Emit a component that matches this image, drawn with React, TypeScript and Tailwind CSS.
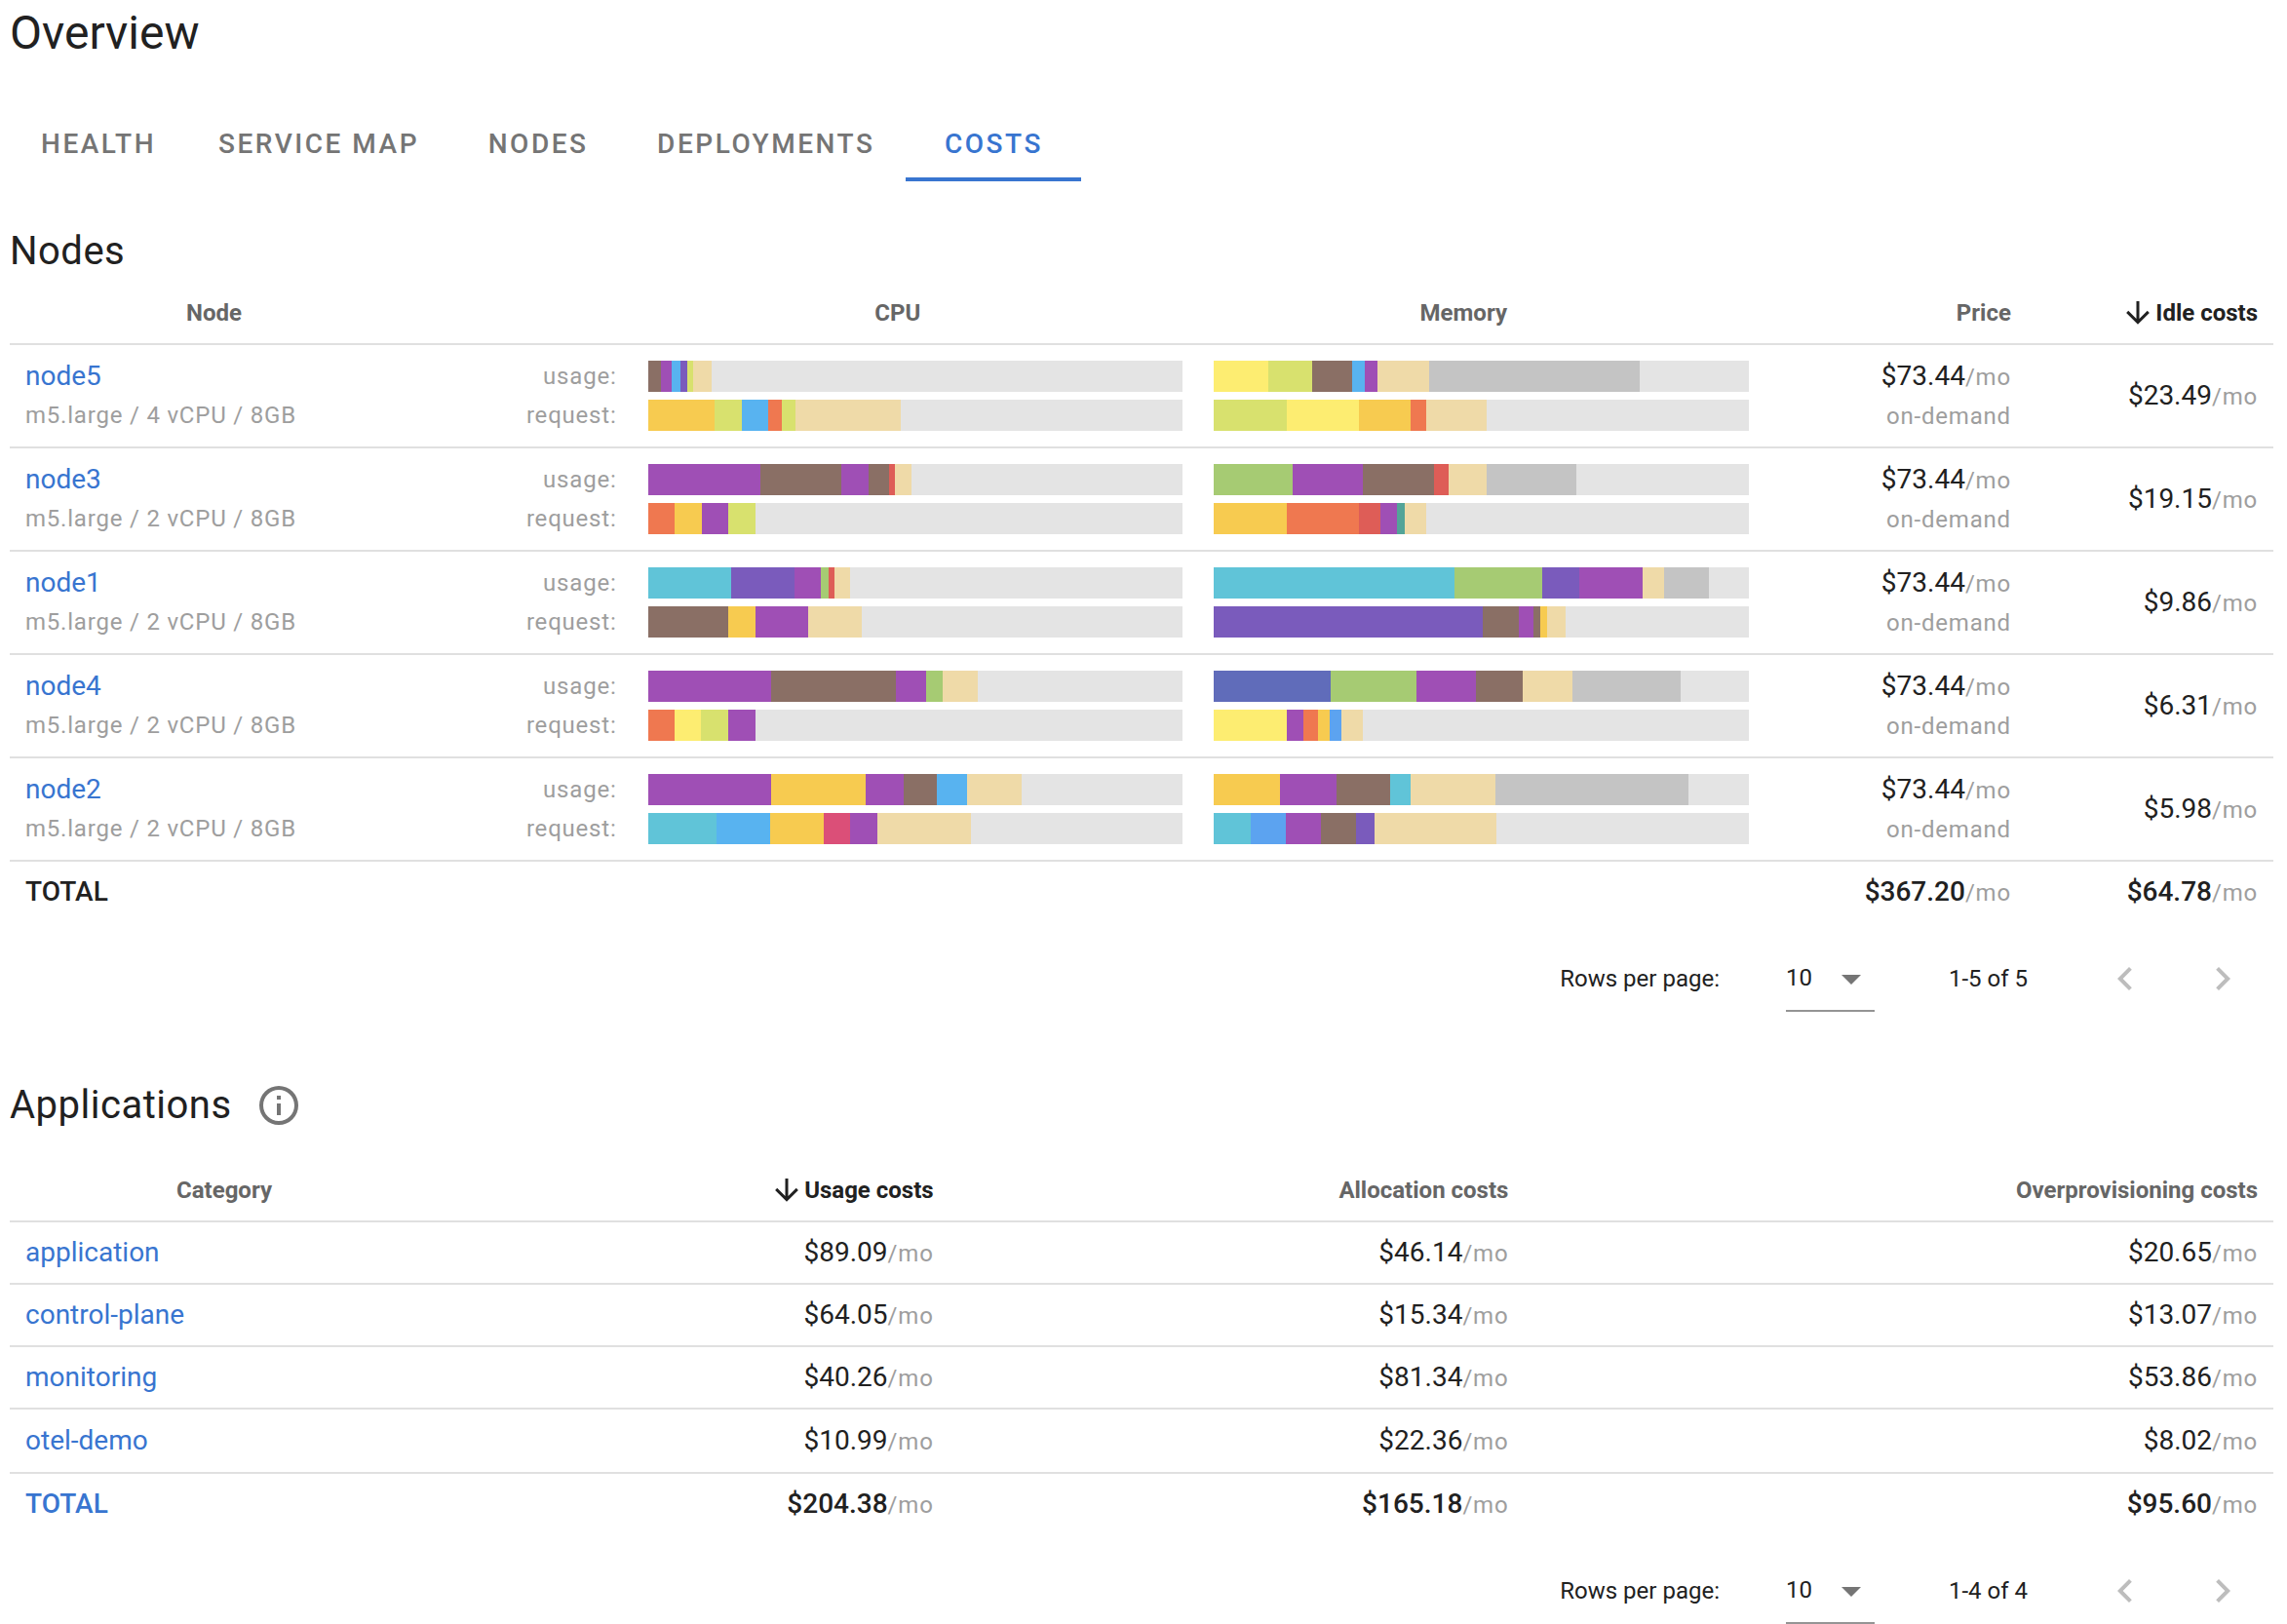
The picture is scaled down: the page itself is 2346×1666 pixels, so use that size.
import React, { useState } from 'react';
import clsx from 'clsx';

type Segment = [color: string, percent: number];

interface NodeRow {
  name: string;
  info: string;
  cpuUsage: Segment[];
  cpuRequest: Segment[];
  memUsage: Segment[];
  memRequest: Segment[];
  price: string;
  idle: string;
}

// Chart palette
const AMBER = '#f7cb50';
const BLUE = '#58b3f0';
const BLUE_2 = '#5ca3f0';
const BROWN = '#8a6f65';
const CYAN = '#60c4d8';
const GREEN = '#a6cb73';
const INDIGO = '#606cba';
const LIME = '#d8e16e';
const ORANGE = '#ef7850';
const PINK = '#db4f78';
const PURPLE = '#9f4fb5';
const RED = '#de5d57';
const TEAL = '#53a498';
const VIOLET = '#7a5bbc';
const YELLOW = '#fded71';
const OTHER = '#efdaa8';
const CACHED = '#c4c4c4';

const tabs = ['Health', 'Service Map', 'Nodes', 'Deployments', 'Costs'];

const nodes: NodeRow[] = [
  {
    name: 'node5',
    info: 'm5.large / 4 vCPU / 8GB',
    cpuUsage: [[BROWN, 2.5], [PURPLE, 2], [BLUE, 1.6], [VIOLET, 1.2], [LIME, 1.1], [OTHER, 3.6]],
    cpuRequest: [[AMBER, 12.4], [LIME, 5.1], [BLUE, 5], [ORANGE, 2.5], [LIME, 2.6], [OTHER, 19.8]],
    memUsage: [[YELLOW, 10.2], [LIME, 8.2], [BROWN, 7.4], [BLUE, 2.4], [PURPLE, 2.4], [OTHER, 9.6], [CACHED, 39.4]],
    memRequest: [[LIME, 13.6], [YELLOW, 13.5], [AMBER, 9.8], [ORANGE, 2.8], [OTHER, 11.3]],
    price: '$73.44',
    idle: '$23.49',
  },
  {
    name: 'node3',
    info: 'm5.large / 2 vCPU / 8GB',
    cpuUsage: [[PURPLE, 21], [BROWN, 15.2], [PURPLE, 5.1], [BROWN, 3.8], [RED, 1.1], [OTHER, 3.1]],
    cpuRequest: [[ORANGE, 5], [AMBER, 5.1], [PURPLE, 5], [LIME, 5]],
    memUsage: [[GREEN, 14.8], [PURPLE, 13.1], [BROWN, 13.3], [RED, 2.7], [OTHER, 7.1], [CACHED, 16.8]],
    memRequest: [[AMBER, 13.6], [ORANGE, 13.5], [RED, 4], [PURPLE, 3.1], [TEAL, 1.6], [OTHER, 3.9]],
    price: '$73.44',
    idle: '$19.15',
  },
  {
    name: 'node1',
    info: 'm5.large / 2 vCPU / 8GB',
    cpuUsage: [[CYAN, 15.5], [VIOLET, 11.9], [PURPLE, 4.9], [GREEN, 1.6], [RED, 1], [OTHER, 2.9]],
    cpuRequest: [[BROWN, 15], [AMBER, 5.1], [PURPLE, 9.8], [OTHER, 10.1]],
    memUsage: [[CYAN, 45], [GREEN, 16.4], [VIOLET, 6.9], [PURPLE, 11.9], [OTHER, 4], [CACHED, 8.5]],
    memRequest: [[VIOLET, 50.4], [BROWN, 6.7], [PURPLE, 2.7], [BROWN, 1.2], [AMBER, 1.3], [OTHER, 3.6]],
    price: '$73.44',
    idle: '$9.86',
  },
  {
    name: 'node4',
    info: 'm5.large / 2 vCPU / 8GB',
    cpuUsage: [[PURPLE, 23.1], [BROWN, 23.2], [PURPLE, 5.7], [GREEN, 3.1], [OTHER, 6.6]],
    cpuRequest: [[ORANGE, 5], [YELLOW, 5], [LIME, 5], [PURPLE, 5.1]],
    memUsage: [[INDIGO, 21.8], [GREEN, 16.1], [PURPLE, 11.1], [BROWN, 8.8], [OTHER, 9.2], [CACHED, 20.4]],
    memRequest: [[YELLOW, 13.6], [PURPLE, 3.1], [ORANGE, 2.8], [AMBER, 2.2], [BLUE_2, 2.2], [OTHER, 4]],
    price: '$73.44',
    idle: '$6.31',
  },
  {
    name: 'node2',
    info: 'm5.large / 2 vCPU / 8GB',
    cpuUsage: [[PURPLE, 23], [AMBER, 17.7], [PURPLE, 7.2], [BROWN, 6.1], [BLUE, 5.7], [OTHER, 10.2]],
    cpuRequest: [[CYAN, 12.8], [BLUE, 10], [AMBER, 10.1], [PINK, 4.9], [PURPLE, 5.1], [OTHER, 17.5]],
    memUsage: [[AMBER, 12.3], [PURPLE, 10.7], [BROWN, 10], [CYAN, 3.8], [OTHER, 15.8], [CACHED, 36.1]],
    memRequest: [[CYAN, 6.9], [BLUE_2, 6.6], [PURPLE, 6.5], [BROWN, 6.6], [VIOLET, 3.5], [OTHER, 22.7]],
    price: '$73.44',
    idle: '$5.98',
  },
];

const categories = [
  { name: 'application', usage: '$89.09', allocation: '$46.14', over: '$20.65' },
  { name: 'control-plane', usage: '$64.05', allocation: '$15.34', over: '$13.07' },
  { name: 'monitoring', usage: '$40.26', allocation: '$81.34', over: '$53.86' },
  { name: 'otel-demo', usage: '$10.99', allocation: '$22.36', over: '$8.02' },
];

const Icon: React.FC<{ d: string; className: string }> = ({ d, className }) => (
  <svg viewBox="0 0 24 24" className={clsx('shrink-0 fill-current', className)} aria-hidden="true">
    <path d={d} />
  </svg>
);

const ARROW_DOWN = 'M11,4H13V16L18.5,10.5L19.92,11.92L12,19.84L4.08,11.92L5.5,10.5L11,16V4Z';
const CHEVRON_LEFT = 'M15.41,16.58L10.83,12L15.41,7.41L14,6L8,12L14,18L15.41,16.58Z';
const CHEVRON_RIGHT = 'M8.59,16.58L13.17,12L8.59,7.41L10,6L16,12L10,18L8.59,16.58Z';
const MENU_DOWN = 'M7,10L12,15L17,10H7Z';
const INFORMATION =
  'M11,9H13V7H11M12,20C7.59,20 4,16.41 4,12C4,7.59 7.59,4 12,4C16.41,4 20,7.59 20,12C20,16.41 16.41,20 12,20M12,2A10,10 0 0,0 2,12A10,10 0 0,0 12,22A10,10 0 0,0 22,12A10,10 0 0,0 12,2M11,17H13V11H11V17Z';

const Header: React.FC<{ text: string; align?: 'center' | 'end'; sorted?: boolean }> = ({ text, align = 'end', sorted }) => (
  <th scope="col" className="h-16 border-b-2 border-[#e0e0e0] px-4" aria-sort={sorted ? 'descending' : undefined}>
    <button
      type="button"
      className={clsx(
        'flex w-full items-center text-2xl font-bold whitespace-nowrap',
        align === 'center' ? 'flex-row-reverse justify-center' : 'justify-end',
        sorted ? 'text-[#212121]' : 'text-[#666666]',
      )}
    >
      {/* hidden arrow still takes its room in the header */}
      <Icon d={ARROW_DOWN} className={clsx('h-9 w-9', !sorted && 'invisible')} />
      <span>{text}</span>
    </button>
  </th>
);

const Caption: React.FC<{ children: React.ReactNode }> = ({ children }) => (
  <span className="text-2xl leading-10 tracking-[0.033em] text-[#9e9e9e]">{children}</span>
);

const Cost: React.FC<{ value: string; bold?: boolean }> = ({ value, bold }) => (
  <span className="whitespace-nowrap">
    <span className={clsx(bold && 'font-medium')}>{value}</span>
    <Caption>/mo</Caption>
  </span>
);

const Bar: React.FC<{ segments: Segment[] }> = ({ segments }) => (
  <div className="flex h-8 bg-[#e4e4e4]">
    {segments.map(([color, percent], i) => (
      <div key={i} style={{ width: `${percent}%`, backgroundColor: color }} />
    ))}
  </div>
);

const Footer: React.FC<{ id: string; range: string }> = ({ id, range }) => {
  const [size, setSize] = useState('10');

  return (
    <div className="flex items-center justify-end px-4 pt-6 text-2xl">
      <label htmlFor={id} className="mr-[68px]">
        Rows per page:
      </label>
      <div className="relative mr-[76px]">
        <select
          id={id}
          value={size}
          onChange={(e) => setSize(e.target.value)}
          className="block h-[68px] w-[91px] appearance-none border-b-2 border-[#949494] bg-transparent outline-none"
        >
          <option>5</option>
          <option>10</option>
          <option>20</option>
        </select>
        <Icon d={MENU_DOWN} className="pointer-events-none absolute top-2.5 right-0 h-12 w-12 text-[#757575]" />
      </div>
      <span className="mr-16">{range}</span>
      <div className="flex gap-7 text-[#bdbdbd]">
        <button type="button" disabled aria-label="Previous page" className="flex h-[68px] w-[72px] items-center justify-center">
          <Icon d={CHEVRON_LEFT} className="h-12 w-12" />
        </button>
        <button type="button" disabled aria-label="Next page" className="flex h-[68px] w-[72px] items-center justify-center">
          <Icon d={CHEVRON_RIGHT} className="h-12 w-12" />
        </button>
      </div>
    </div>
  );
};

const NodesTable: React.FC = () => (
  <table className="w-full table-fixed border-separate border-spacing-0 text-[28px] leading-10">
    <colgroup>
      <col className="w-[19.6%]" />
      <col className="w-[7.9%]" />
      <col />
      <col />
      <col className="w-[11.6%]" />
      <col className="w-[10.9%]" />
    </colgroup>
    <thead>
      <tr>
        <Header text="Node" align="center" />
        <td className="border-b-2 border-[#e0e0e0]" />
        <Header text="CPU" align="center" />
        <Header text="Memory" align="center" />
        <Header text="Price" />
        <Header text="Idle costs" sorted />
      </tr>
    </thead>
    <tbody>
      {nodes.map((n) => (
        <tr key={n.name} className="h-[106px] *:border-b-2 *:border-[#e0e0e0] *:px-4">
          <td>
            <div className="flex flex-col items-start">
              <a href={`#${n.name}`} className="text-[#3875d0]">
                {n.name}
              </a>
              <Caption>{n.info}</Caption>
            </div>
          </td>
          <td>
            <div className="flex flex-col items-end">
              <Caption>usage:</Caption>
              <Caption>request:</Caption>
            </div>
          </td>
          <td>
            <div className="flex flex-col gap-2">
              <Bar segments={n.cpuUsage} />
              <Bar segments={n.cpuRequest} />
            </div>
          </td>
          <td>
            <div className="flex flex-col gap-2">
              <Bar segments={n.memUsage} />
              <Bar segments={n.memRequest} />
            </div>
          </td>
          <td>
            <div className="flex flex-col items-end">
              <Cost value={n.price} />
              <Caption>on-demand</Caption>
            </div>
          </td>
          <td className="text-right">
            <Cost value={n.idle} />
          </td>
        </tr>
      ))}
      <tr className="h-[62px] *:px-4">
        <td className="font-medium">TOTAL</td>
        <td colSpan={3} />
        <td className="text-right">
          <Cost value="$367.20" bold />
        </td>
        <td className="text-right">
          <Cost value="$64.78" bold />
        </td>
      </tr>
    </tbody>
  </table>
);

const ApplicationsTable: React.FC = () => (
  <table className="w-full table-fixed border-separate border-spacing-0 text-[28px] leading-10">
    <colgroup>
      <col className="w-[20.5%]" />
      <col className="w-[21%]" />
      <col className="w-[25.4%]" />
      <col />
    </colgroup>
    <thead>
      <tr>
        <Header text="Category" align="center" />
        <Header text="Usage costs" sorted />
        <Header text="Allocation costs" />
        <Header text="Overprovisioning costs" />
      </tr>
    </thead>
    <tbody>
      {categories.map((c) => (
        <tr key={c.name} className="h-16 *:border-b-2 *:border-[#e0e0e0] *:px-4 nth-4:h-[66px]">
          <td>
            <a href={`#${c.name}`} className="text-[#3875d0]">
              {c.name}
            </a>
          </td>
          <td className="text-right">
            <Cost value={c.usage} />
          </td>
          <td className="text-right">
            <Cost value={c.allocation} />
          </td>
          <td className="text-right">
            <Cost value={c.over} />
          </td>
        </tr>
      ))}
      <tr className="h-[62px] *:px-4">
        <td>
          <a href="#total" className="font-medium text-[#3875d0]">
            TOTAL
          </a>
        </td>
        <td className="text-right">
          <Cost value="$204.38" bold />
        </td>
        <td className="text-right">
          <Cost value="$165.18" bold />
        </td>
        <td className="text-right">
          <Cost value="$95.60" bold />
        </td>
      </tr>
    </tbody>
  </table>
);

const App: React.FC = () => {
  const [active, setActive] = useState('Costs');

  return (
    <main className="bg-white pt-0.5 pr-3.5 pl-2.5 font-[Roboto,sans-serif] text-[#212121]">
      <h1 className="text-5xl leading-16">Overview</h1>

      <div role="tablist" className="mt-10 flex">
        {tabs.map((tab) => (
          <button
            key={tab}
            type="button"
            role="tab"
            aria-selected={tab === active}
            onClick={() => setActive(tab)}
            className={clsx(
              'h-20 min-w-[180px] border-b-4 px-8 pt-2 text-[28px] font-medium tracking-[0.09em] uppercase',
              tab === active ? 'border-[#3875d0] text-[#3875d0]' : 'border-transparent text-[#757575]',
            )}
          >
            {tab}
          </button>
        ))}
      </div>

      <section className="mt-10">
        <h2 className="text-[40px] leading-16 tracking-[0.0125em]">Nodes</h2>
        <NodesTable />
        <Footer id="nodes-rows" range="1-5 of 5" />
      </section>

      <section className="mt-16">
        <div className="mb-6 flex items-center gap-6">
          <h2 className="text-[40px] leading-16 tracking-[0.0125em]">Applications</h2>
          <button type="button" aria-label="About application costs" className="text-[#757575]">
            <Icon d={INFORMATION} className="h-12 w-12" />
          </button>
        </div>
        <ApplicationsTable />
        <Footer id="applications-rows" range="1-4 of 4" />
      </section>
    </main>
  );
};

export default App;
